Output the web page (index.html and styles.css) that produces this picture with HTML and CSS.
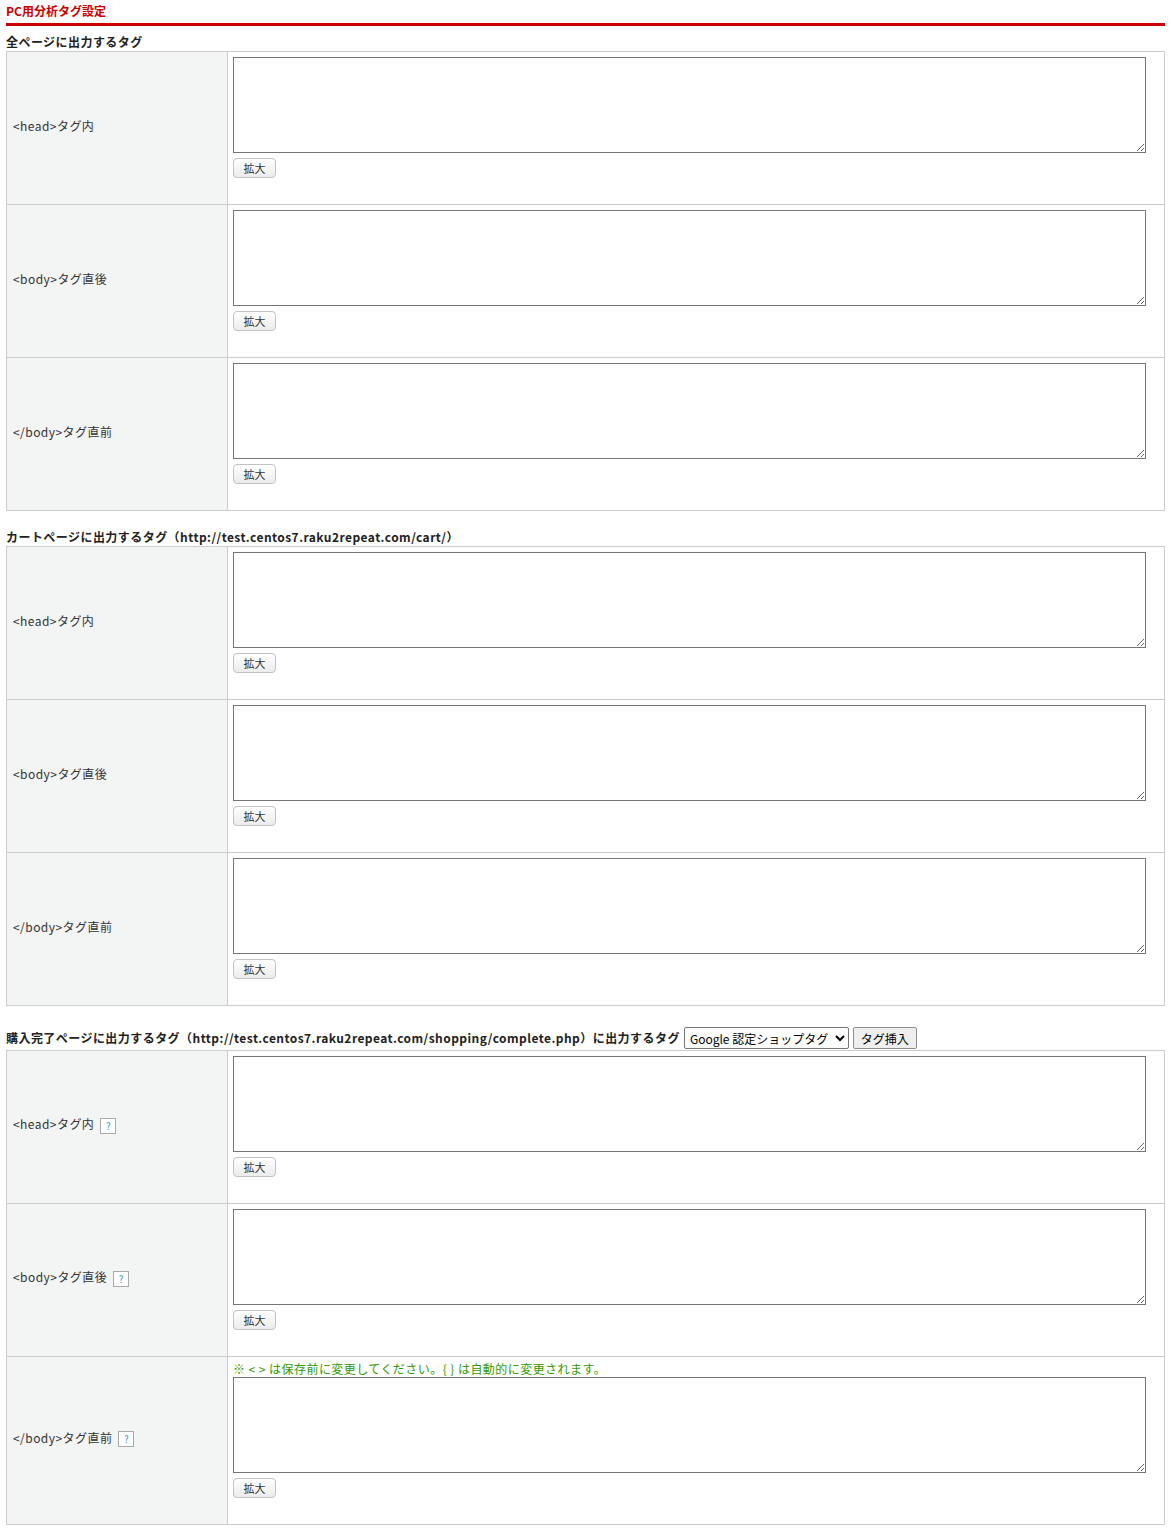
FILE: index.html
```html
<!DOCTYPE html>
<html lang="ja">
<head>
<meta charset="utf-8">
<title>PC用分析タグ設定</title>
<link rel="stylesheet" href="styles.css">
</head>
<body>
<div class="page">
  <h1 class="title">PC用分析タグ設定</h1>

  <h2 class="sec">全ページに出力するタグ</h2>
  <table class="form">
    <tr><th>&lt;head&gt;タグ内</th><td><textarea></textarea><button class="zoom">拡大</button></td></tr>
    <tr><th>&lt;body&gt;タグ直後</th><td><textarea></textarea><button class="zoom">拡大</button></td></tr>
    <tr><th>&lt;/body&gt;タグ直前</th><td><textarea></textarea><button class="zoom">拡大</button></td></tr>
  </table>

  <h2 class="sec">カートページに出力するタグ（http://test.centos7.raku2repeat.com/cart/）</h2>
  <table class="form">
    <tr><th>&lt;head&gt;タグ内</th><td><textarea></textarea><button class="zoom">拡大</button></td></tr>
    <tr><th>&lt;body&gt;タグ直後</th><td><textarea></textarea><button class="zoom">拡大</button></td></tr>
    <tr><th>&lt;/body&gt;タグ直前</th><td><textarea></textarea><button class="zoom">拡大</button></td></tr>
  </table>

  <h2 class="sec sec-tool"><span class="sec-text">購入完了ページに出力するタグ（http://test.centos7.raku2repeat.com/shopping/complete.php）に出力するタグ</span><select class="sel"><option>Google 認定ショップタグ</option></select><button class="insert">タグ挿入</button></h2>
  <table class="form">
    <tr><th>&lt;head&gt;タグ内<span class="help">?</span></th><td><textarea></textarea><button class="zoom">拡大</button></td></tr>
    <tr><th>&lt;body&gt;タグ直後<span class="help">?</span></th><td><textarea></textarea><button class="zoom">拡大</button></td></tr>
    <tr><th>&lt;/body&gt;タグ直前<span class="help">?</span></th><td class="with-note"><p class="note">※ &lt; &gt; は保存前に変更してください。{ } は自動的に変更されます。</p><textarea></textarea><button class="zoom">拡大</button></td></tr>
  </table>
</div>
</body>
</html>
```

FILE: styles.css
```css
html, body {
  margin: 0;
  padding: 0;
  background: #fff;
}
body {
  font-family: "Noto Sans CJK JP", "Noto Sans", sans-serif;
  font-size: 12px;
  color: #333;
  letter-spacing: 0.45px;
}
.page {
  padding: 0 6px 0 6px;
  width: 1159px;
}
.title {
  margin: 0;
  padding: 2px 0 4px 0;
  height: 17px;
  font-size: 12px;
  line-height: 17px;
  font-weight: bold;
  color: #cc0000;
  border-bottom: 3px solid #cc0000;
  letter-spacing: 0;
}
.sec {
  margin: 8px 0 0 0;
  font-size: 12px;
  line-height: 16px;
  height: 17px;
  font-weight: bold;
  color: #222;
}
.form + .sec {
  margin-top: 18px;
}
.form + .sec-tool {
  margin-top: 21px;
  height: 23px;
  display: flex;
  align-items: flex-start;
  white-space: nowrap;
}
.sec-text {
  line-height: 21px;
}
.sel {
  margin-left: 4px;
  height: 22px;
  width: 165px;
  font-family: inherit;
  font-size: 12px;
  font-weight: normal;
  letter-spacing: 0;
  color: #000;
  border: 1px solid #767676;
  border-radius: 2px;
  background: #fff;
  padding: 0 0 0 1px;
}
.insert {
  margin-left: 4px;
  height: 22px;
  width: 64px;
  font-family: inherit;
  font-size: 12px;
  font-weight: normal;
  color: #000;
  background: #efefef;
  border: 1px solid #8f8f8f;
  border-radius: 2px;
  padding: 0;
}
.form {
  width: 1159px;
  border-collapse: collapse;
  margin: 0;
}
.form th, .form td {
  border: 1px solid #ccc;
}
.form th {
  width: 208px;
  background: #f3f4f4;
  text-align: left;
  font-weight: normal;
  padding: 0 6px 5px 6px;
  vertical-align: middle;
  color: #333;
}
.form td {
  padding: 5px 0 0 5px;
  vertical-align: top;
}
.form textarea {
  display: block;
  width: 913px;
  height: 96px;
  box-sizing: border-box;
  border: 1px solid #767676;
  border-radius: 0;
  margin: 0;
  resize: vertical;
}
.zoom {
  display: block;
  margin: 5px 0 26px 0;
  width: 43px;
  height: 20px;
  padding: 0;
  font-family: inherit;
  font-size: 11px;
  color: #333;
  border: 1px solid #c3c3c3;
  border-radius: 4px;
  background: linear-gradient(#ffffff, #ececec);
}
.help {
  display: inline-block;
  margin-left: 6px;
  width: 14px;
  height: 14px;
  line-height: 14px;
  text-align: center;
  font-size: 10px;
  letter-spacing: 0;
  color: #3a8fd6;
  border: 1px solid #aaa;
  background: #fff;
  vertical-align: middle;
}
.form td.with-note {
  padding-top: 3px;
}
.note {
  margin: 0;
  height: 17px;
  line-height: 17px;
  font-size: 12px;
  color: #339900;
}
```
